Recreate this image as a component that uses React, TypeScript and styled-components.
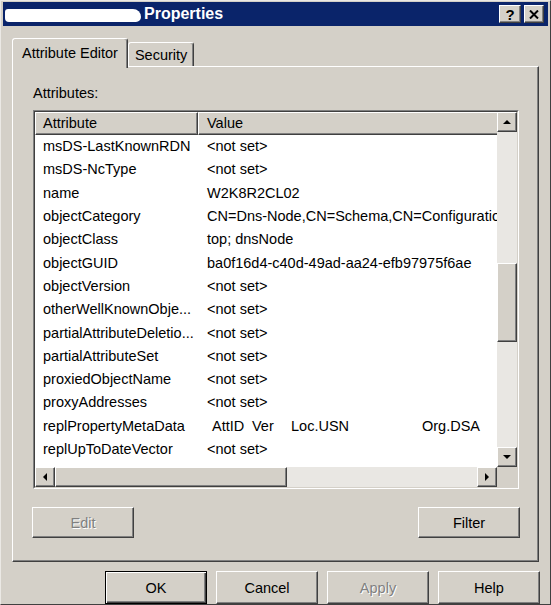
import React from "react";
import styled, { createGlobalStyle, css } from "styled-components";

const face = "#d4d0c8";

const GlobalStyle = createGlobalStyle`
  html, body {
    margin: 0;
    padding: 0;
    background: ${face};
  }
  body {
    font-family: "Liberation Sans", Arial, sans-serif;
    font-size: 14.5px;
    color: #000;
    overflow: hidden;
  }
  * {
    box-sizing: border-box;
  }
`;

const raised = css`
  border: 1px solid;
  border-color: #fff #404040 #404040 #fff;
  box-shadow: inset -1px -1px #808080;
  background: ${face};
`;

const Window = styled.div`
  width: 551px;
  height: 605px;
  padding: 1px 2px 0 2px;
  border: 1px solid;
  border-color: #ebe9e5 #404040 #404040 #ebe9e5;
  display: flex;
  flex-direction: column;
  background: ${face};
`;

const TitleBar = styled.div`
  height: 24px;
  flex-shrink: 0;
  background: #0a246a;
  display: flex;
  align-items: center;
  padding: 0 4px 0 2px;
  color: #fff;
  font-weight: bold;
  font-size: 16px;
`;

const Redacted = styled.span`
  width: 136px;
  height: 13px;
  margin: 2px 3px 0 0;
  background: #fff;
  border-radius: 3px 8px 5px 4px;
`;

const TitleText = styled.span`
  flex: 1;
`;

const CaptionButton = styled.button<{ $w: number }>`
  ${raised}
  width: ${(p) => p.$w}px;
  height: 18px;
  padding: 0;
  display: flex;
  align-items: center;
  justify-content: center;
  font: bold 15px "Liberation Sans", Arial, sans-serif;
  color: #000;
  & + & {
    margin-left: 3px;
  }
`;

const TabRow = styled.div`
  display: flex;
  align-items: flex-end;
  height: 28px;
  margin: 12px 0 0 9px;
`;

const Tab = styled.div<{ $active?: boolean }>`
  position: relative;
  display: flex;
  align-items: center;
  border: 1px solid;
  border-bottom: none;
  border-color: #fff #404040 transparent #fff;
  box-shadow: inset -1px 0 #808080;
  border-radius: 3px 3px 0 0;
  background: ${face};
  height: ${(p) => (p.$active ? 30 : 24)}px;
  padding: ${(p) => (p.$active ? "0 9px 2px" : "0 6px")};
  margin-bottom: ${(p) => (p.$active ? -2 : 0)}px;
  z-index: ${(p) => (p.$active ? 1 : 0)};
`;

const Panel = styled.div`
  margin-left: 9px;
  width: 527px;
  border: 1px solid;
  border-color: #fff #404040 #404040 #fff;
  box-shadow: inset -1px -1px #808080;
  padding: 18px 19px 23px 20px;
  display: flex;
  flex-direction: column;
`;

const Label = styled.div`
  height: 17px;
  line-height: 17px;
`;

const ListBox = styled.div`
  margin-top: 8px;
  height: 379px;
  border: 1px solid;
  border-color: #808080 #fff #fff #808080;
`;

const ListInner = styled.div`
  height: 100%;
  border: 1px solid;
  border-color: #404040 ${face} ${face} #404040;
  display: grid;
  grid-template-columns: 1fr 20px;
  grid-template-rows: 1fr 20px;
  background: #fff;
`;

const Content = styled.div`
  overflow: hidden;
  display: flex;
  flex-direction: column;
`;

const HeaderRow = styled.div`
  display: flex;
  height: 22.5px;
  flex-shrink: 0;
`;

const HeaderCell = styled.div<{ $w: number; $pad: number }>`
  ${raised}
  width: ${(p) => p.$w}px;
  flex-shrink: 0;
  padding-left: ${(p) => p.$pad}px;
  display: flex;
  align-items: center;
`;

const Row = styled.div`
  display: flex;
  height: 23.3px;
  flex-shrink: 0;
  align-items: center;
  white-space: nowrap;
`;

const NameCell = styled.div`
  width: 163px;
  flex-shrink: 0;
  padding-left: 8px;
  overflow: hidden;
`;

const ValueCell = styled.div`
  padding-left: 9px;
`;

const MetaCols = styled.span`
  padding-left: 5px;
`;

const MetaCol = styled.span<{ $w: number }>`
  display: inline-block;
  width: ${(p) => (p.$w ? `${p.$w}px` : "auto")};
`;

// dotted scrollbar track, averaged to a flat light grey
const track = css`
  background: #e9e7e3;
`;

const VScroll = styled.div`
  ${track}
  display: flex;
  flex-direction: column;
`;

const HScroll = styled.div`
  ${track}
  display: flex;
`;

const Corner = styled.div`
  background: ${face};
`;

const ArrowButton = styled.div`
  ${raised}
  width: 20px;
  height: 20px;
  flex-shrink: 0;
  display: flex;
  align-items: center;
  justify-content: center;
`;

const VThumb = styled.div<{ $offset: number; $size: number }>`
  ${raised}
  margin-top: ${(p) => p.$offset}px;
  height: ${(p) => p.$size}px;
  flex-shrink: 0;
`;

const HThumb = styled.div<{ $size: number }>`
  ${raised}
  width: ${(p) => p.$size}px;
  flex-shrink: 0;
`;

const Spacer = styled.div`
  flex: 1;
`;

const PanelButtons = styled.div`
  display: flex;
  justify-content: space-between;
  margin: 18px -1px 0 -1px;
`;

const DialogButtons = styled.div`
  display: flex;
  justify-content: flex-end;
  gap: 9px;
  margin-top: 9px;
  padding-right: 8px;
`;

const Button = styled.button<{ $default?: boolean; $h?: number }>`
  ${raised}
  width: 102px;
  height: ${(p) => p.$h ?? 31}px;
  padding: 0;
  font: 14.5px "Liberation Sans", Arial, sans-serif;
  color: #000;
  &:disabled {
    color: #808080;
    text-shadow: 1px 1px #fff;
  }
  ${(p) =>
    p.$default &&
    css`
      border: 1px solid #000;
      box-shadow: inset 1px 1px #fff, inset -1px -1px #404040,
        inset -2px -2px #808080;
    `}
`;

type Dir = "up" | "down" | "left" | "right";

const arrowPoints: Record<Dir, string> = {
  up: "4,0 8,4 0,4",
  down: "0,0 8,0 4,4",
  left: "4,0 4,8 0,4",
  right: "0,0 4,4 0,8",
};

function Arrow({ dir }: { dir: Dir }) {
  const vertical = dir === "up" || dir === "down";
  return (
    <ArrowButton>
      <svg width={vertical ? 8 : 4} height={vertical ? 4 : 8}>
        <polygon points={arrowPoints[dir]} fill="#000" />
      </svg>
    </ArrowButton>
  );
}

const NOT_SET = "<not set>";

const rows: [string, string][] = [
  ["msDS-LastKnownRDN", NOT_SET],
  ["msDS-NcType", NOT_SET],
  ["name", "W2K8R2CL02"],
  ["objectCategory", "CN=Dns-Node,CN=Schema,CN=Configuration,DC=contoso,DC=com"],
  ["objectClass", "top; dnsNode"],
  ["objectGUID", "ba0f16d4-c40d-49ad-aa24-efb97975f6ae"],
  ["objectVersion", NOT_SET],
  ["otherWellKnownObje...", NOT_SET],
  ["partialAttributeDeletio...", NOT_SET],
  ["partialAttributeSet", NOT_SET],
  ["proxiedObjectName", NOT_SET],
  ["proxyAddresses", NOT_SET],
  ["replPropertyMetaData", "meta"],
  ["replUpToDateVector", NOT_SET],
  ["repsFrom", NOT_SET],
];

const metaColumns: [string, number][] = [
  ["AttID", 40],
  ["Ver", 39],
  ["Loc.USN", 131],
  ["Org.DSA", 0],
];

function App() {
  return (
    <Window>
      <GlobalStyle />
      <TitleBar>
        <Redacted />
        <TitleText>Properties</TitleText>
        <CaptionButton $w={22}>?</CaptionButton>
        <CaptionButton $w={20}>
          <svg width="10" height="9" viewBox="0 0 10 9">
            <path d="M1 0.5 L9 8.5 M9 0.5 L1 8.5" stroke="#000" strokeWidth="2" />
          </svg>
        </CaptionButton>
      </TitleBar>

      <TabRow>
        <Tab $active>Attribute Editor</Tab>
        <Tab>Security</Tab>
      </TabRow>

      <Panel>
        <Label>Attributes:</Label>
        <ListBox>
          <ListInner>
            <Content>
              <HeaderRow>
                <HeaderCell $w={163} $pad={7}>
                  Attribute
                </HeaderCell>
                <HeaderCell $w={320} $pad={8}>
                  Value
                </HeaderCell>
              </HeaderRow>
              {rows.map(([name, value]) => (
                <Row key={name}>
                  <NameCell>{name}</NameCell>
                  <ValueCell>
                    {value === "meta" ? (
                      <MetaCols>
                        {metaColumns.map(([label, w]) => (
                          <MetaCol key={label} $w={w}>
                            {label}
                          </MetaCol>
                        ))}
                      </MetaCols>
                    ) : (
                      value
                    )}
                  </ValueCell>
                </Row>
              ))}
            </Content>
            <VScroll>
              <Arrow dir="up" />
              <VThumb $offset={131} $size={79} />
              <Spacer />
              <Arrow dir="down" />
            </VScroll>
            <HScroll>
              <Arrow dir="left" />
              <HThumb $size={232} />
              <Spacer />
              <Arrow dir="right" />
            </HScroll>
            <Corner />
          </ListInner>
        </ListBox>
        <PanelButtons>
          <Button disabled>Edit</Button>
          <Button>Filter</Button>
        </PanelButtons>
      </Panel>

      <DialogButtons>
        <Button $default $h={33}>
          OK
        </Button>
        <Button $h={33}>Cancel</Button>
        <Button $h={33} disabled>
          Apply
        </Button>
        <Button $h={33}>Help</Button>
      </DialogButtons>
    </Window>
  );
}

export default App;
